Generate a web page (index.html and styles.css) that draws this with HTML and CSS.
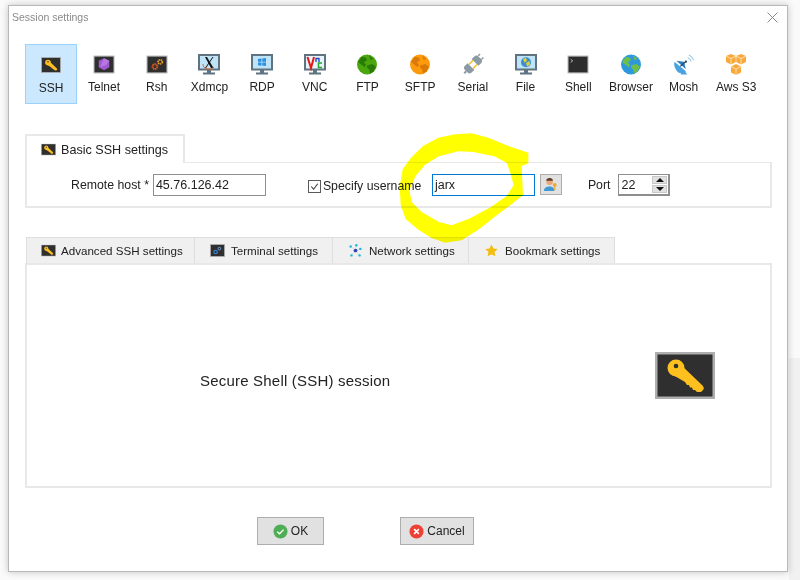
FILE: index.html
```html
<!DOCTYPE html>
<html lang="en">
<head>
<meta charset="utf-8">
<title>Session settings</title>
<link rel="stylesheet" href="styles.css">
</head>
<body>
<svg class="defs" width="0" height="0" aria-hidden="true">
  <defs>
    <symbol id="i-key" viewBox="0 0 60 47">
      <rect x="1.250" y="1.250" width="57.500" height="44.500" fill="#2f2f2f" stroke="#aeaeae" stroke-width="2.500"/>
      <circle cx="21" cy="16" r="8.500" fill="#fdc01e"/>
      <path d="M25 12L47 33Q50 36 48 38L46 40H42L40 38 38 38 37 35.500 35 35.500 34 33 32 33 30 30 18 23Z" fill="#fdc01e"/>
      <circle cx="21" cy="14" r="2.300" fill="#2f2f2f"/>
    </symbol>
    <symbol id="i-globe" viewBox="0 0 20 20">
      <circle cx="10" cy="10" r="9.500" fill="currentColor"/>
      <path d="M5 2.500l4 1 1 2.500-3 2 2 2-1 2.500-3-2-3.500-3zM12 1.500l4 3-2.500 1.500zM10 11l5-1.500 3.500 2.500-2.500 5-3 1.500-1-4-2-1.500z" fill="var(--land)"/>
    </symbol>
    <symbol id="i-screen" viewBox="0 0 22 21">
      <rect x="1" y="1" width="20" height="14.500" fill="#bfe3f7" stroke="#5f7480" stroke-width="2"/>
      <rect x="9" y="16" width="4" height="3" fill="#5f7480"/>
      <rect x="5" y="18.500" width="12" height="2" fill="#5f7480"/>
    </symbol>
  </defs>
</svg>

<main class="window">
  <header class="titlebar">
    <span class="title">Session settings</span>
    <svg class="close" viewBox="0 0 11 11"><path d="M.5.5l10 10M10.500.5l-10 10" stroke="#8a8a8a" fill="none"/></svg>
  </header>

  <nav class="toolbar">
    <div class="tool tool-on">
      <svg class="ic" viewBox="0 0 22 21"><use href="#i-key" x="1" y="2" width="20" height="16"/></svg><span>SSH</span>
    </div>
    <div class="tool">
      <svg class="ic" viewBox="0 0 20 20"><rect x=".5" y="2" width="19" height="16" fill="#2f2f2f" stroke="#b4b4b4"/><path d="M10 4l5 2.500v6l-5 3-5-3v-6z" fill="#a05ad0"/><path d="M10 4l5 2.500-3 4-6 2z" fill="#b678e0"/></svg><span>Telnet</span>
    </div>
    <div class="tool">
      <svg class="ic" viewBox="0 0 20 20"><rect x=".5" y="2" width="19" height="16" fill="#2f2f2f" stroke="#b4b4b4"/><circle cx="8" cy="12" r="2.300" fill="none" stroke="#e2571e" stroke-width="1.800" stroke-dasharray="1.500 .5"/><circle cx="13" cy="7.500" r="2" fill="none" stroke="#f3a21d" stroke-width="1.600" stroke-dasharray="1.300 .5"/></svg><span>Rsh</span>
    </div>
    <div class="tool">
      <svg class="ic" viewBox="0 0 22 21"><use href="#i-screen"/><path d="M7 3l6 11h2.500L9 3z" fill="#111"/><path d="M14.500 3h1L8 14H7z" fill="#111"/><path d="M5 10a6 5 0 0 0 11 3" fill="none" stroke="#d9662a"/></svg><span>Xdmcp</span>
    </div>
    <div class="tool">
      <svg class="ic" viewBox="0 0 22 21"><use href="#i-screen"/><path d="M7 5l3.500-.5v3.200H7zM11.300 4.400L15 4v3.700h-3.700zM7 8.500h3.500v3.200L7 11.200zM11.300 8.500H15V12l-3.700-.4z" fill="#2b8fe0"/></svg><span>RDP</span>
    </div>
    <div class="tool">
      <svg class="ic" viewBox="0 0 22 21"><rect x="1" y="1" width="20" height="14.500" fill="#e8f4fb" stroke="#5f7480" stroke-width="2"/><rect x="9" y="16" width="4" height="3" fill="#5f7480"/><rect x="5" y="18.500" width="12" height="2" fill="#5f7480"/><path d="M3.500 3L7 14l3-11" fill="none" stroke="#e01919" stroke-width="2"/><path d="M12 8V4.500h3V8" fill="none" stroke="#1b45c9" stroke-width="1.300"/><path d="M18 9h-3.500v4.500H18" fill="none" stroke="#1fa82c" stroke-width="1.500"/></svg><span>VNC</span>
    </div>
    <div class="tool">
      <svg class="ic ic-ftp" viewBox="0 0 20 20"><use href="#i-globe"/></svg><span>FTP</span>
    </div>
    <div class="tool">
      <svg class="ic ic-sftp" viewBox="0 0 20 20"><use href="#i-globe"/></svg><span>SFTP</span>
    </div>
    <div class="tool">
      <svg class="ic" viewBox="0 0 22 22"><g transform="rotate(-45 11 11)"><path d="M-2 10h3v2h-3z" fill="#8c9aa3"/><path d="M1 9q0-3 3-3h4v10H4q-3 0-3-3z" fill="#8c9aa3"/><path d="M8 8h6M8 14h6" stroke="#f5c242" stroke-width="1.800"/><path d="M14 6h4q3 0 3 3v4q0 3-3 3h-4z" fill="#8c9aa3"/><path d="M21 8.500h3M21 13.500h3" stroke="#8c9aa3" stroke-width="1.500"/></g></svg><span>Serial</span>
    </div>
    <div class="tool">
      <svg class="ic" viewBox="0 0 22 21"><use href="#i-screen"/><circle cx="11" cy="8.200" r="5" fill="#3a8fd0"/><path d="M8 5l3-1.300 1 3-2.500 2zM11 9l3.500-2 .5 3.500-3 2z" fill="#e4cf3a"/></svg><span>File</span>
    </div>
    <div class="tool">
      <svg class="ic" viewBox="0 0 20 20"><rect x=".5" y="2" width="19" height="16" fill="#2d2d2d" stroke="#b4b4b4"/><path d="M3 5l2 1.500L3 8" fill="none" stroke="#ddd" stroke-width=".7"/></svg><span>Shell</span>
    </div>
    <div class="tool">
      <svg class="ic ic-browser" viewBox="0 0 20 20"><use href="#i-globe"/></svg><span>Browser</span>
    </div>
    <div class="tool">
      <svg class="ic" viewBox="0 0 22 22"><path d="M1 8l12 10c-3 3-8 3-10-1-1.500-2.500-3-5-2-9z" fill="#4aa3e0"/><path d="M3 7l8 1 2 8z" fill="#2a7fc0"/><path d="M7 13l6-5" stroke="#20435f" stroke-width="1.200"/><circle cx="13" cy="8" r="1.200" fill="#20435f"/><path d="M15 4a5 5 0 0 1 3.500 4M16 1a8 8 0 0 1 5 5.500" fill="none" stroke="#7fbfe6"/><path d="M9 17l-1.500 4.500h7L12 18z" fill="#4aa3e0"/></svg><span>Mosh</span>
    </div>
    <div class="tool">
      <svg class="ic" viewBox="0 0 22 21"><path d="M6 0l5 2v6l-5 2.500L1 8V2zM16 0l5 2v6l-5 2.500L11 8V2zM11 10l5 2.500v6L11 21l-5-2.500v-6z" fill="#f9a93a"/><path d="M1 2l5 2.500L11 2l5 2.500L21 2M6 12.500L11 15l5-2.500M6 4.500v6M16 4.500v6M11 15v6M11 2v6" fill="none" stroke="#fff" stroke-width=".6"/></svg><span>Aws S3</span>
    </div>
  </nav>

  <section class="basic">
    <div class="tab-basic">
      <svg class="tab-ic" viewBox="0 0 60 47"><use href="#i-key"/></svg>Basic SSH settings
    </div>
    <div class="basic-panel">
      <label class="lbl-host">Remote host *</label>
      <div class="field field-host">45.76.126.42</div>
      <span class="check"><svg viewBox="0 0 12 12"><path d="M2.500 6l2.500 3 4.500-6" fill="none" stroke="#333" stroke-width="1.100"/></svg></span>
      <span class="lbl-user">Specify username</span>
      <div class="field field-user">jarx</div>
      <div class="user-btn">
        <svg viewBox="0 0 16 16"><circle cx="7" cy="5" r="3.500" fill="#e8a777"/><path d="M3.500 4a3.500 3 0 0 1 7 0z" fill="#5a3c28"/><path d="M1 15c0-4 3-5 6-5s5 1 5 5z" fill="#3f9ad6"/><circle cx="12.500" cy="8.500" r="2" fill="#f5a623"/><path d="M12 10h1.200v4H12z" fill="#f5a623"/></svg>
      </div>
      <span class="lbl-port">Port</span>
      <div class="field field-port">22
        <div class="spin">
          <span class="spin-b"><i class="arrow-up"></i></span>
          <span class="spin-b"><i class="arrow-down"></i></span>
        </div>
      </div>
    </div>
  </section>

  <section class="advanced">
    <div class="tabs">
      <div class="tab tab-1"><svg class="tab-ic" viewBox="0 0 60 47"><use href="#i-key"/></svg>Advanced SSH settings</div>
      <div class="tab tab-2"><svg class="tab-ic" viewBox="0 0 20 17"><rect x=".5" y=".5" width="19" height="16" fill="#2f2f2f" stroke="#b4b4b4"/><circle cx="7.500" cy="10.500" r="2.300" fill="none" stroke="#3d86d6" stroke-width="1.500"/><circle cx="12.500" cy="6" r="1.800" fill="none" stroke="#6aa9e8" stroke-width="1.300"/></svg>Terminal settings</div>
      <div class="tab tab-3"><svg class="tab-ic net" viewBox="0 0 16 16"><path d="M8 8L2 3M8 8l1-7M8 8l6-2M8 8l5 6M8 8l-5 6" stroke="#a9dbe8" stroke-width=".7"/><circle cx="8" cy="8" r="2.300" fill="#3a3fb5"/><circle cx="2" cy="3" r="1.500" fill="#22b5d8"/><circle cx="9" cy="1.500" r="1.500" fill="#22b5d8"/><circle cx="14" cy="6" r="1.500" fill="#22b5d8"/><circle cx="13" cy="14" r="1.500" fill="#22b5d8"/><circle cx="3" cy="14" r="1.500" fill="#22b5d8"/></svg>Network settings</div>
      <div class="tab tab-4"><svg class="tab-ic star" viewBox="0 0 16 16"><path d="M8 .5l2.300 5 5.400.6-4 3.700 1.100 5.400L8 12.500l-4.800 2.700 1.100-5.400-4-3.700 5.400-.6z" fill="#f2bd0e"/></svg>Bookmark settings</div>
    </div>
    <div class="adv-panel">
      <span class="adv-text">Secure Shell (SSH) session</span>
      <svg class="big-key" viewBox="0 0 60 47"><use href="#i-key"/></svg>
    </div>
  </section>

  <footer class="actions">
    <button class="btn btn-ok"><svg viewBox="0 0 16 16"><circle cx="8" cy="8" r="7.500" fill="#4fae55"/><path d="M4.500 8.200l2.500 2.300 4.300-4.500" fill="none" stroke="#fff" stroke-width="1.500"/></svg>OK</button>
    <button class="btn btn-cancel"><svg viewBox="0 0 16 16"><circle cx="8" cy="8" r="7.500" fill="#ee4035"/><path d="M5.500 5.500l5 5M10.500 5.500l-5 5" stroke="#fff" stroke-width="1.800"/></svg>Cancel</button>
  </footer>

  <svg class="scribble" viewBox="0 0 420 345" aria-hidden="true">
    <path d="M400 68L400 100 380 108 384 195 343 228 302 258 252 298 200 331 150 338 108 323 68 298 32 267 17 225 14 170 23 118 48 83 84 48 130 23 180 13 230 10 280 23 340 48Z M235 66L190 64 132 79 90 104 62 138 43 180 50 216 80 246 132 276 170 286 222 266 288 231 336 197 356 165 346 130 336 99 298 79Z" fill="#ffff00" fill-rule="evenodd"/>
  </svg>
</main>
</body>
</html>
```
FILE: styles.css
```css
* { box-sizing: border-box; }
html, body { margin: 0; height: 100%; }
body {
  background: linear-gradient(#f1f1f1, #f1f1f1) right bottom / 11px 222px no-repeat, #fafafa;
  padding: 5px 0 0 8px;
  font-family: "Liberation Sans", Arial, sans-serif;
  font-size: 12px;
  color: #222;
  overflow: hidden;
}
.defs { position: absolute; }
.window {
  position: relative;
  width: 780px;
  height: 567px;
  background: #fff;
  border: 1px solid #b8b8b8;
  box-shadow: 0 0 7px rgba(0,0,0,.22);
  padding: 0 16px;
  filter: blur(.4px);
}
.titlebar {
  display: flex;
  justify-content: space-between;
  align-items: center;
  height: 22px;
  margin: 0 -7px 0 -13px;
}
.title { font-size: 10.500px; color: #8a8a8a; }
.close { width: 11px; height: 11px; }

.toolbar {
  display: grid;
  grid-template-columns: repeat(14, 52.700px);
  margin: 16px 0 0 0;
  height: 60px;
}
.tool {
  display: flex;
  flex-direction: column;
  align-items: center;
  padding-top: 9px;
  font-size: 12px;
  gap: 5px;
  border: 1px solid transparent;
  white-space: nowrap;
}
.tool-on { background: #cce8ff; border-color: #99d1ff; width: 52px; padding-top: 10px; }
.ic { width: 22px; height: 21px; overflow: visible; }
.ic-ftp { color: #4aa80c; --land: #2a7a08; }
.ic-sftp { color: #ff9a0d; --land: #d97a08; }
.ic-browser { color: #2f98dc; --land: #6cc04a; }

.basic { margin-top: 30px; }
.tab-basic {
  display: flex;
  align-items: center;
  width: 160px;
  height: 29px;
  padding-left: 14px;
  gap: 5px;
  border: 2px solid #e8e8e8;
  border-bottom: 0;
  position: relative;
  z-index: 1;
  background: #fff;
  font-size: 12.600px;
}
.tab-ic { width: 15px; height: 13px; flex: none; }
.basic-panel {
  display: flex;
  align-items: center;
  height: 46px;
  width: 747px;
  margin-top: -1px;
  border-style: solid;
  border-width: 1px 2px 2px;
  border-color: #e8e8e8;
  padding-left: 44px;
  font-size: 12.300px;
}
.lbl-host { margin-right: 4px; }
.field {
  height: 22px;
  border: 1px solid #8e8e8e;
  padding-left: 2px;
  line-height: 20px;
  font-size: 12.500px;
  background: #fff;
}
.field-host { width: 113px; }
.check {
  width: 13px;
  height: 13px;
  border: 1px solid #5a5a5a;
  margin: 4px 0 0 42px;
  display: flex;
}
.lbl-user { margin: 2px 0 0 2px; width: 109px; }
.field-user { width: 103px; border-color: #0078d7; }
.user-btn {
  width: 22px;
  height: 21px;
  margin-left: 5px;
  background: #e1e1e1;
  border: 1px solid #adadad;
  padding: 2px;
  display: flex;
}
.lbl-port { margin-left: 26px; }
.field-port {
  width: 52px;
  margin-left: 8px;
  display: flex;
  justify-content: space-between;
  border-width: 1px 2px 2px 1px;
}
.spin { display: flex; flex-direction: column; gap: 1px; padding: 1px; }
.spin-b {
  width: 15px;
  height: 8px;
  background: #e1e1e1;
  border: 1px solid #c8c8c8;
  display: flex;
  align-items: center;
  justify-content: center;
}
.arrow-up, .arrow-down { width: 0; height: 0; border: 4px solid transparent; }
.arrow-up { border-bottom-color: #111; border-top-width: 0; }
.arrow-down { border-top-color: #111; border-bottom-width: 0; }

.advanced { margin-top: 29px; }
.tabs { display: flex; margin-left: 1px; height: 26px; font-size: 11.600px; }
.tab {
  display: flex;
  align-items: center;
  gap: 6px;
  background: #f0f0f0;
  border: 1px solid #dedede;
  border-bottom: 0;
  border-left: 0;
  padding-left: 15px;
}
.tab-1 { width: 169px; border-left: 1px solid #dedede; padding-left: 14px; gap: 5px; }
.tab-2 { width: 138px; }
.tab-3 { width: 136px; }
.tab-4 { width: 146px; }
.adv-panel {
  display: flex;
  align-items: center;
  width: 747px;
  height: 225px;
  border: 2px solid #e8e8e8;
  padding: 0 55px 0 173px;
  justify-content: space-between;
}
.adv-text { font-size: 15px; letter-spacing: .2px; margin-top: 9px; }
.big-key { width: 60px; height: 47px; }
.actions { display: flex; margin-top: 29px; padding-left: 232px; gap: 76px; }
.btn {
  display: flex;
  align-items: center;
  justify-content: center;
  gap: 3px;
  height: 28px;
  background: #e1e1e1;
  border: 1px solid #adadad;
  font: 12px "Liberation Sans", Arial, sans-serif;
  color: #222;
  padding: 0;
}
.btn svg { width: 15px; height: 15px; }
.btn-ok { width: 67px; }
.btn-cancel { width: 74px; }
.scribble {
  position: absolute;
  left: 386px;
  top: 124px;
  width: 140px;
  height: 115px;
  mix-blend-mode: multiply;
}
```
